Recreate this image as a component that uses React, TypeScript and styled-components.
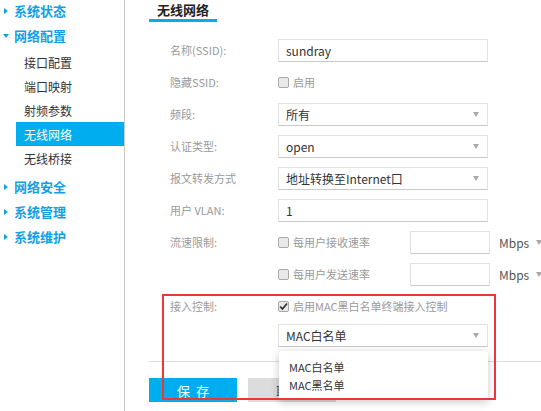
import React from 'react'
import styled, { createGlobalStyle } from 'styled-components'

const Colors = {
  primary: '#00aeef',
  menu: '#139fe4',
  text: '#333333',
  label: '#9a9a9a',
  border: '#e2e2e2',
  borderDark: '#c9c9c9',
  annotation: '#ee3636',
}

const GlobalStyle = createGlobalStyle`
  html, body {
    margin: 0;
    padding: 0;
    background: #fff;
  }
  body {
    font-family: "Noto Sans CJK SC", "Noto Sans", sans-serif;
    color: ${Colors.text};
    overflow: hidden;
  }
`

const Page = styled.div`
  display: flex;
  width: 541px;
  height: 411px;
  overflow: hidden;
  position: relative;
`

const Sidebar = styled.nav`
  width: 124px;
  flex-shrink: 0;
  border-right: 1px solid #c8c8c8;
  height: 411px;
`

const MenuList = styled.div`
  margin-top: -2px;
`

const TopItem = styled.div`
  height: 25px;
  display: flex;
  align-items: center;
  padding-left: 3px;
  gap: 5px;
  color: ${Colors.menu};
  font-size: 13px;
  font-weight: 700;
`

const Arrow = styled.span<{ $open?: boolean }>`
  width: 0;
  height: 0;
  ${({ $open }) =>
    $open
      ? `border-left: 3px solid transparent; border-right: 3px solid transparent; border-top: 4px solid ${Colors.menu}; margin-right: 0;`
      : `border-top: 3px solid transparent; border-bottom: 3px solid transparent; border-left: 4px solid ${Colors.menu}; margin-left: 1px; margin-right: 1px;`}
`

const SubList = styled.div`
  padding: 2px 0 4px 16px;
`

const SubItem = styled.div<{ $active?: boolean }>`
  height: 24px;
  display: flex;
  align-items: center;
  padding-left: 8px;
  font-size: 12px;
  color: ${({ $active }) => ($active ? '#fff' : Colors.text)};
  background: ${({ $active }) => ($active ? Colors.primary : 'transparent')};
`

const Main = styled.main`
  flex: 1;
  display: flex;
  flex-direction: column;
`

const TabBar = styled.div`
  display: flex;
  padding-left: 24px;
`

const Tab = styled.div`
  width: 68px;
  height: 20px;
  display: flex;
  align-items: center;
  justify-content: center;
  font-size: 13px;
  font-weight: 700;
  color: #222;
  border-bottom: 3px solid ${Colors.primary};
  margin-top: -1px;
`

const Form = styled.div`
  margin-top: 12px;
  padding-left: 45px;
  display: flex;
  flex-direction: column;
`

const Row = styled.div`
  height: 32px;
  display: flex;
  align-items: center;
`

const Label = styled.div`
  width: 108px;
  flex-shrink: 0;
  font-size: 11px;
  color: ${Colors.label};
`

const Field = styled.div<{ $width?: number }>`
  width: ${({ $width }) => $width ?? 210}px;
  height: 23px;
  box-sizing: border-box;
  border: 1px solid ${Colors.border};
  border-bottom-color: ${Colors.borderDark};
  display: flex;
  align-items: center;
  justify-content: space-between;
  padding: 0 8px 0 7px;
  font-size: 12px;
  color: ${Colors.text};
  background: #fff;
`

const Caret = styled.span`
  width: 0;
  height: 0;
  border-left: 3px solid transparent;
  border-right: 3px solid transparent;
  border-top: 5px solid #a8a8a8;
`

const Check = styled.span`
  width: 11px;
  height: 11px;
  box-sizing: border-box;
  border: 1px solid #a9a9a9;
  border-radius: 2px;
  background: #e9e9e9;
  display: inline-flex;
  align-items: center;
  justify-content: center;
  margin-right: 4px;
`

const CheckLabel = styled.label`
  display: flex;
  align-items: center;
  font-size: 11px;
  color: ${Colors.label};
`

const RateGroup = styled.div`
  display: flex;
  align-items: center;
`

const RateCheck = styled(CheckLabel)`
  width: 132px;
`

const Unit = styled.span`
  font-size: 12px;
  color: #555;
  margin-left: 9px;
  width: 28px;
`

const UnitCaret = styled(Caret)`
  margin-left: 9px;
`

const StackCell = styled.div`
  display: flex;
  flex-direction: column;
  position: relative;
`

const AccessRow = styled.div`
  display: flex;
  align-items: flex-start;
  padding-top: 8px;
`

const AccessLabel = styled(Label)`
  line-height: 16px;
`

const AccessCheck = styled(CheckLabel)`
  height: 16px;
  margin-bottom: 10px;
`

const Divider = styled.div`
  height: 1px;
  background: #dcdcdc;
  margin: 14px 0 0 24px;
`

const Buttons = styled.div`
  display: flex;
  gap: 11px;
  padding: 16px 0 0 24px;
`

const Button = styled.div<{ $primary?: boolean }>`
  width: 88px;
  height: 24px;
  display: flex;
  align-items: center;
  justify-content: center;
  font-size: 13px;
  letter-spacing: 6px;
  text-indent: 6px;
  color: ${({ $primary }) => ($primary ? '#fff' : '#555')};
  background: ${({ $primary }) => ($primary ? Colors.primary : '#dcdcdc')};
`

const Dropdown = styled.div`
  position: absolute;
  left: 1px;
  top: 53px;
  width: 209px;
  padding: 7px 0 6px;
  background: #fff;
  border-radius: 2px;
  box-shadow: 0 2px 8px rgba(0, 0, 0, 0.22);
  z-index: 3;
`

const Option = styled.div`
  height: 18px;
  display: flex;
  align-items: center;
  padding-left: 10px;
  font-size: 11px;
  color: #333;
`

const Annotation = styled.div`
  position: absolute;
  left: 162px;
  top: 294px;
  width: 334px;
  height: 106px;
  box-sizing: border-box;
  border: 2px solid ${Colors.annotation};
  z-index: 4;
  pointer-events: none;
`

const Tick = () => (
  <svg width="9" height="9" viewBox="0 0 9 9">
    <path d="M1.2 4.6 L3.5 7 L8 1.5" fill="none" stroke="#333" strokeWidth="1.8" />
  </svg>
)

const menu = [
  { title: '系统状态' },
  { title: '网络配置', open: true, children: ['接口配置', '端口映射', '射频参数', '无线网络', '无线桥接'] },
  { title: '网络安全' },
  { title: '系统管理' },
  { title: '系统维护' },
]

export default function App() {
  return (
    <>
      <GlobalStyle />
      <Page>
        <Sidebar>
          <MenuList>
            {menu.map((m) => (
              <React.Fragment key={m.title}>
                <TopItem>
                  <Arrow $open={m.open} />
                  {m.title}
                </TopItem>
                {m.children && (
                  <SubList>
                    {m.children.map((c) => (
                      <SubItem key={c} $active={c === '无线网络'}>
                        {c}
                      </SubItem>
                    ))}
                  </SubList>
                )}
              </React.Fragment>
            ))}
          </MenuList>
        </Sidebar>
        <Main>
          <TabBar>
            <Tab>无线网络</Tab>
          </TabBar>
          <Form>
            <Row>
              <Label>名称(SSID):</Label>
              <Field>sundray</Field>
            </Row>
            <Row>
              <Label>隐藏SSID:</Label>
              <CheckLabel>
                <Check />
                启用
              </CheckLabel>
            </Row>
            <Row>
              <Label>频段:</Label>
              <Field>
                所有
                <Caret />
              </Field>
            </Row>
            <Row>
              <Label>认证类型:</Label>
              <Field>
                open
                <Caret />
              </Field>
            </Row>
            <Row>
              <Label>报文转发方式</Label>
              <Field>
                地址转换至Internet口
                <Caret />
              </Field>
            </Row>
            <Row>
              <Label>用户 VLAN:</Label>
              <Field>1</Field>
            </Row>
            <Row>
              <Label>流速限制:</Label>
              <RateGroup>
                <RateCheck>
                  <Check />
                  每用户接收速率
                </RateCheck>
                <Field $width={80} />
                <Unit>Mbps</Unit>
                <UnitCaret />
              </RateGroup>
            </Row>
            <Row>
              <Label />
              <RateGroup>
                <RateCheck>
                  <Check />
                  每用户发送速率
                </RateCheck>
                <Field $width={80} />
                <Unit>Mbps</Unit>
                <UnitCaret />
              </RateGroup>
            </Row>
            <AccessRow>
              <AccessLabel>接入控制:</AccessLabel>
              <StackCell>
                <AccessCheck>
                  <Check>
                    <Tick />
                  </Check>
                  启用MAC黑白名单终端接入控制
                </AccessCheck>
                <Field>
                  MAC白名单
                  <Caret />
                </Field>
                <Dropdown>
                  <Option>MAC白名单</Option>
                  <Option>MAC黑名单</Option>
                </Dropdown>
              </StackCell>
            </AccessRow>
          </Form>
          <Divider />
          <Buttons>
            <Button $primary>保存</Button>
            <Button>取消</Button>
          </Buttons>
        </Main>
        <Annotation />
      </Page>
    </>
  )
}
